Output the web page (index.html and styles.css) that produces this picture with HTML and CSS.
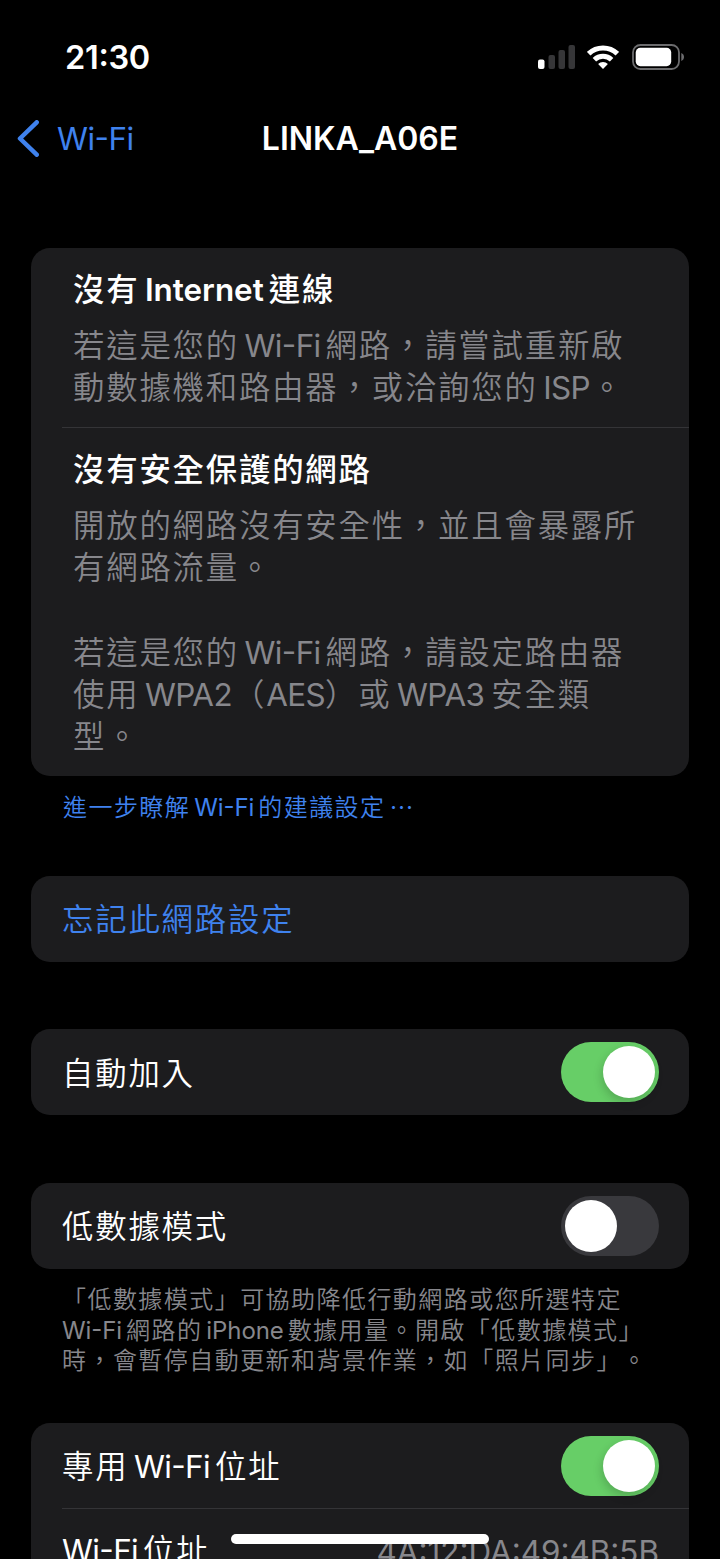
FILE: index.html
```
<!DOCTYPE html>
<html lang="zh-Hant">
<head>
<meta charset="utf-8">
<title>LINKA_A06E</title>
<link rel="stylesheet" href="styles.css">
</head>
<body>
<div class="screen">
  <header class="status">
    <span class="time">21:30</span>
    <span class="status-icons">
      <svg class="signal" width="38" height="24" viewBox="0 0 38 24">
        <rect x="0" y="14.5" width="6.5" height="9.5" rx="2" fill="#fff"/>
        <rect x="10.5" y="10" width="6.5" height="14" rx="2" fill="#363638"/>
        <rect x="20.5" y="5" width="6.5" height="19" rx="2" fill="#363638"/>
        <rect x="30.5" y="0" width="6.5" height="24" rx="2" fill="#363638"/>
      </svg>
      <svg class="wifi" width="32" height="24" viewBox="0 0 32 24">
        <g fill="none" stroke="#fff" stroke-width="5">
          <path d="M1.700 8.700A20.600 20.600 0 0 1 30.300 8.700"/>
          <path d="M7.400 14.700A12.500 12.500 0 0 1 24.600 14.700"/>
        </g>
        <path d="M16 24l-4.900-5a7 7 0 0 1 9.800 0z" fill="#fff"/>
      </svg>
      <svg class="battery" width="53" height="26" viewBox="0 0 53 26">
        <rect x="1" y="1" width="46" height="24" rx="7.5" fill="none" stroke="#6c6c6e" stroke-width="1.8"/>
        <rect x="3.7" y="3.8" width="35.5" height="18.4" rx="4.6" fill="#fff"/>
        <path d="M49.300 9v8c1.700-.7 2.700-2.200 2.700-4s-1-3.300-2.700-4z" fill="#6c6c6e"/>
      </svg>
    </span>
  </header>

  <nav class="nav">
    <a class="back"><svg class="chevron" width="22" height="37" viewBox="0 0 22 37"><path d="M19.700 2.300L3 18.500l16.700 16.200" fill="none" stroke="#3f82ee" stroke-width="4.5" stroke-linecap="round" stroke-linejoin="round"/></svg><span class="back-label">Wi-Fi</span></a>
    <h1 class="nav-title">LINKA_A06E</h1>
  </nav>

  <main>
    <section class="card notices">
      <article class="notice">
        <h2>沒有<span class="latin">Internet</span>連線</h2>
        <p>若這是您的<span class="latin">Wi-Fi</span>網路，請嘗試重新啟<br>動數據機和路由器，或洽詢您的<span class="latin closed">ISP</span>。</p>
      </article>
      <article class="notice ruled">
        <h2>沒有安全保護的網路</h2>
        <p>開放的網路沒有安全性，並且會暴露所<br>有網路流量。<br><br>若這是您的<span class="latin">Wi-Fi</span>網路，請設定路由器<br>使用<span class="latin closed">WPA2</span>（<span class="latin tight">AES</span>）或<span class="latin wide">WPA3</span>安全類<br>型。</p>
      </article>
    </section>
    <p class="note link">進一步瞭解<span class="latin">Wi-Fi</span>的建議設定<span class="dots">⋯</span></p>

    <section class="card row forget"><span class="link">忘記此網路設定</span></section>

    <section class="card row auto"><span>自動加入</span><span class="toggle on"></span></section>

    <section class="card row low"><span>低數據模式</span><span class="toggle"></span></section>
    <p class="note foot">「低數據模式」可協助降低行動網路或您所選特定<br><span class="latin first">Wi-Fi</span>網路的<span class="latin">iPhone</span>數據用量。開啟「低數據模式」<br>時，會暫停自動更新和背景作業，如「照片同步」。</p>

    <section class="card private">
      <div class="row"><span class="label">專用<span class="latin">Wi-Fi</span>位址</span><span class="toggle on"></span></div>
      <div class="row ruled"><span class="label"><span class="latin first">Wi-Fi</span>位址</span><span class="mac">4A:12:DA:49:4B:5B</span></div>
    </section>
  </main>
  <div class="home-bar"></div>
</div>
</body>
</html>
```
FILE: styles.css
```
* { box-sizing: border-box; }

body {
  margin: 0;
  background: #000;
  color: #fff;
  font-family: Inter, "Noto Sans CJK TC", sans-serif;
  font-size: 31.4px;
  font-weight: 350;
  text-spacing-trim: space-all;
  overflow: hidden;
}

.screen {
  position: relative;
  width: 720px;
  height: 1559px;
  overflow: hidden;
}

h1, h2, p { margin: 0; font-size: inherit; }

.status {
  display: flex;
  justify-content: space-between;
  align-items: center;
  height: 114px;
  padding: 0 35px 0 65px;
}

.time {
  font-size: 32.5px;
  font-weight: 600;
  font-feature-settings: "case";
  letter-spacing: -0.3px;
}

.status-icons { display: flex; align-items: center; }
.status-icons svg { display: block; }
.wifi { margin: 0 13px 0 11px; }

.nav {
  display: grid;
  grid-template-columns: 1fr auto 1fr;
  align-items: center;
  height: 48px;
  padding: 0 17px;
}

.back { display: flex; align-items: center; color: #3f82ee; }
.back-label {
  margin-left: 18px;
  padding-top: 1px;
  font-weight: 400;
  letter-spacing: -0.5px;
  font-feature-settings: "case";
}
.nav-title { padding-top: 1px; font-size: 32px; font-weight: 600; }

.card {
  margin: 0 31px;
  border-radius: 19px;
  background: #1c1c1e;
}

.notices { margin-top: 86px; height: 528px; color: #87878c; }
.notice { position: relative; height: 179px; padding: 21px 42px 0; letter-spacing: 1.8px; }
.notice h2 { color: #fff; font-weight: 500; line-height: 42px; }
.notice p { line-height: 42.2px; margin-top: 14px; white-space: nowrap; }

.ruled { position: relative; }
.ruled::before {
  content: "";
  position: absolute;
  top: 0;
  right: 0;
  left: 31px;
  height: 1px;
  background: #343437;
}
.notice.ruled { padding-top: 22px; }

.latin {
  margin: 0 5px 0 5.5px;
  font-weight: 400;
  letter-spacing: -0.6px;
  font-feature-settings: "case";
}
h2 .latin { margin-right: 5px; font-weight: 600; letter-spacing: 0; }
.first { margin-left: 0; }
.closed { margin-right: 1px; }
.tight { margin: 0; }
.wide { margin-right: 7px; }

.note {
  padding: 0 62px;
  font-size: 24px;
  line-height: 30.8px;
  letter-spacing: 1.45px;
  white-space: nowrap;
}
.note .latin { margin-left: 4px; margin-right: 4px; letter-spacing: -0.1px; }
.note .first { margin-left: 0; }
.link { color: #3f82ee; }
.note.link { margin-top: 17px; padding-left: 63px; }
.dots { margin-left: 4px; }
.foot { margin-top: 16px; color: #87878c; }

.row {
  display: flex;
  align-items: center;
  justify-content: space-between;
  height: 86px;
  padding: 0 30px 0 31px;
  letter-spacing: 1.8px;
}
.row > span:first-child { padding-bottom: 2px; }
.row > .label:first-child { padding-bottom: 4px; }
.forget { margin-top: 52px; }
.auto { margin-top: 67.5px; }
.low { margin-top: 67.5px; }

.toggle {
  display: flex;
  width: 98px;
  height: 60px;
  padding: 4px;
  border-radius: 30px;
  background: #39393d;
}
.toggle::before {
  content: "";
  width: 52px;
  height: 52px;
  border-radius: 50%;
  background: #fff;
}
.toggle.on { justify-content: flex-end; background: #67ce67; }
.toggle.on::before { box-shadow: -1px 4px 10px rgba(0, 0, 0, .18); }

.private { margin-top: 46px; height: 172px; }
.private .row + .row { margin-top: -1px; }
.private .ruled > .label:first-child { padding-bottom: 5px; }
.mac { padding-top: 2px; color: #87878c; font-weight: 400; letter-spacing: 0; font-feature-settings: "case"; }

.home-bar {
  position: absolute;
  top: 1534px;
  left: 231px;
  width: 258px;
  height: 10px;
  border-radius: 5px;
  background: #fff;
}
```
